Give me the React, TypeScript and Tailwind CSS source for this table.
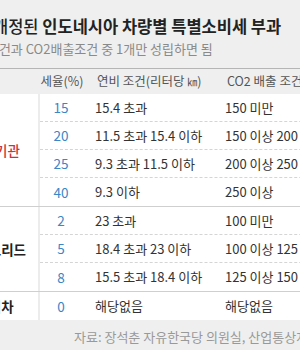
const font = { fontFamily: '"Noto Sans CJK KR", "Noto Sans", sans-serif' };

interface Row {
  rate: string;
  fuel: string;
  co2: string;
}

interface Group {
  name: string;
  red?: boolean;
  rows: Row[];
}

const groups: Group[] = [
  {
    name: "내연기관",
    red: true,
    rows: [
      { rate: "15", fuel: "15.4 초과", co2: "150 미만" },
      { rate: "20", fuel: "11.5 초과 15.4 이하", co2: "150 이상 200 이하" },
      { rate: "25", fuel: "9.3 초과 11.5 이하", co2: "200 이상 250 이하" },
      { rate: "40", fuel: "9.3 이하", co2: "250 이상" },
    ],
  },
  {
    name: "하이브리드",
    rows: [
      { rate: "2", fuel: "23 초과", co2: "100 미만" },
      { rate: "5", fuel: "18.4 초과 23 이하", co2: "100 이상 125 이하" },
      { rate: "8", fuel: "15.5 초과 18.4 이하", co2: "125 이상 150 이하" },
    ],
  },
  {
    name: "전기차",
    rows: [{ rate: "0", fuel: "해당없음", co2: "해당없음" }],
  },
];

export default function App() {
  return (
    <div className="w-[300px] h-[350px] overflow-hidden bg-[#efefef]" style={font}>
      <div className="pt-[15px] ml-[-7px] whitespace-nowrap text-[16.5px] leading-[22px] text-[#222]">
        <span className="font-medium">개정된 </span>
        <span className="font-bold">인도네시아 차량별 특별소비세 부과</span>
      </div>
      <div className="mt-[3px] ml-[-37px] whitespace-nowrap text-[13px] leading-[18px] text-[#8a8a8a]">
        연비조건과 CO2배출조건 중 1개만 성립하면 됨
      </div>

      <div className="mt-[10px] ml-[-48px] w-[420px] border-t border-[#b5b5b5]">
        <div className="flex h-[25px] items-center text-[12.5px] text-[#555] whitespace-nowrap">
          <div className="w-[88px] shrink-0" />
          <div className="w-[44px] shrink-0 text-center">세율(%)</div>
          <div className="w-[132px] shrink-0 pl-[13px]">
            연비 조건(리터당 <span className="text-[10px]">㎞</span>)
          </div>
          <div className="pl-[11px]">CO2 배출 조건</div>
        </div>

        <div className="bg-white">
          {groups.map((g, gi) => (
            <div
              key={g.name}
              className={`flex ${gi < groups.length - 1 ? "border-b border-[#cfcfcf]" : ""}`}
            >
              <div
                className={`w-[88px] shrink-0 flex items-center justify-center text-[13.5px] border-r-2 border-[#ececec] whitespace-nowrap ${
                  g.red ? "text-[#c9333d] font-medium" : "text-[#222] font-bold"
                }`}
              >
                {g.name}
              </div>
              <div className="flex-1 flex flex-col">
                {g.rows.map((r, ri) => (
                  <div
                    key={r.rate}
                    className={`flex h-[28px] items-center whitespace-nowrap text-[13px] text-[#333] ${
                      ri < g.rows.length - 1 ? "border-b border-dashed border-[#d5d5d5]" : ""
                    }`}
                  >
                    <div className="w-[42px] shrink-0 text-center text-[#3a86c6] text-[13.5px]">{r.rate}</div>
                    <div className="w-[132px] shrink-0 pl-[13px]">{r.fuel}</div>
                    <div className="pl-[11px]">{r.co2}</div>
                  </div>
                ))}
              </div>
            </div>
          ))}
        </div>
      </div>

      <div className="mt-[8px] pl-[74px] whitespace-nowrap text-[13px] leading-[18px] text-[#999]">
        자료: 장석춘 자유한국당 의원실, 산업통상자원부
      </div>
    </div>
  );
}
